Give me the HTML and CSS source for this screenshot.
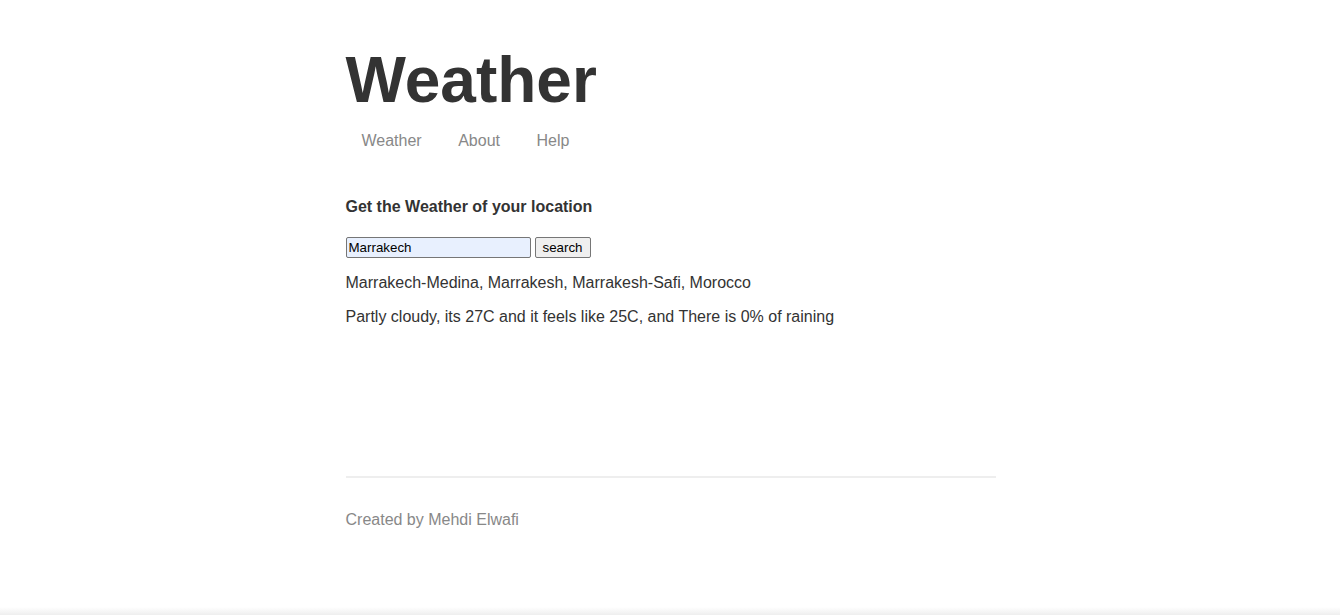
FILE: index.html
```html
<!DOCTYPE html>
<html lang="en">
<head>
<meta charset="utf-8">
<title>Weather</title>
<link rel="stylesheet" href="styles.css">
</head>
<body>
<div class="page">
  <header class="header">
    <h1 class="title">Weather</h1>
    <nav class="nav">
      <a class="nav-link" href="#">Weather</a>
      <a class="nav-link" href="#">About</a>
      <a class="nav-link" href="#">Help</a>
    </nav>
  </header>
  <main class="main-content">
    <p class="intro">Get the Weather of your location</p>
    <form class="search-form">
      <input class="search-input" type="text" value="Marrakech">
      <button class="search-button" type="button">search</button>
    </form>
    <p class="result">Marrakech-Medina, Marrakesh, Marrakesh-Safi, Morocco</p>
    <p class="result">Partly cloudy, its 27C and it feels like 25C, and There is 0% of raining</p>
  </main>
  <footer class="footer">
    <p class="footer-text">Created by Mehdi Elwafi</p>
  </footer>
</div>
</body>
</html>
```
FILE: styles.css
```css
html {
  height: 100%;
  background: linear-gradient(to bottom, #ffffff calc(100% - 8px), #eeeeee 100%);
}
body {
  margin: 0;
  color: #333333;
  font-family: "Liberation Sans", Arial, sans-serif;
  font-size: 16px;
}
.page {
  width: 650px;
  margin: 0 auto;
  padding-left: 1px;
  display: flex;
  flex-direction: column;
}
.header {
  padding-top: 43px;
}
.title {
  margin: 0 0 15px 0;
  font-size: 64px;
  font-weight: bold;
  line-height: 74px;
}
.nav {
  display: flex;
  gap: 36.5px;
  padding-left: 16px;
  line-height: 18px;
}
.nav-link {
  color: #888888;
  text-decoration: none;
}
.main-content {
  padding-top: 48px;
  height: 278px;
}
.intro {
  margin: 0;
  font-weight: bold;
  line-height: 18px;
}
.search-form {
  display: flex;
  gap: 4px;
  margin: 21px 0 16px 0;
}
.search-input {
  box-sizing: border-box;
  width: 185px;
  height: 21px;
  margin: 0;
  padding: 1px 2px;
  font: 13.333px "Liberation Sans", Arial, sans-serif;
  color: #000000;
  background: #e8f0fe;
  border: 1px solid #767676;
  border-radius: 2px;
}
.search-button {
  box-sizing: border-box;
  width: 56px;
  height: 21px;
  margin: 0;
  padding: 1px 6px;
  font: 13.333px "Liberation Sans", Arial, sans-serif;
  color: #000000;
  background: #efefef;
  border: 1px solid #767676;
  border-radius: 2px;
}
.result {
  margin: 0 0 16px 0;
  line-height: 18px;
}
.footer {
  border-top: 2px solid #eeeeee;
  color: #888888;
  padding-top: 33px;
}
.footer-text {
  margin: 0;
  line-height: 18px;
}
```
